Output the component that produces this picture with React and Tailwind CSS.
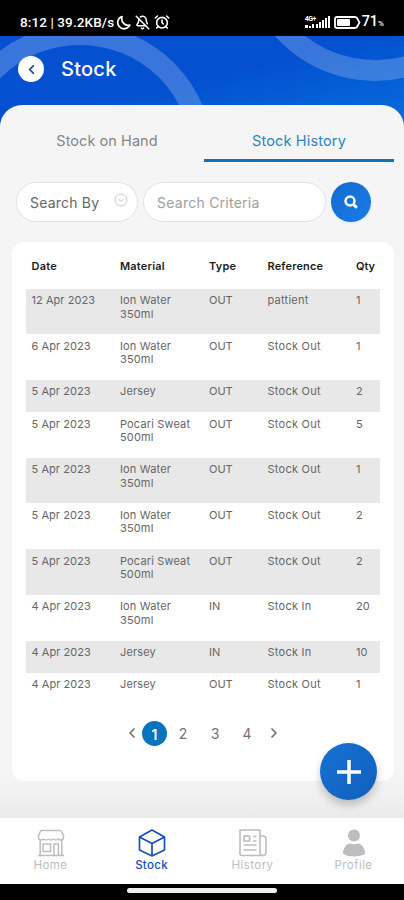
import React from 'react';
import { ChevronLeft, ChevronRight, BellOff, AlarmClock } from 'lucide-react';

const rows = [
  { date: '12 Apr 2023', material: 'Ion Water 350ml', type: 'OUT', reference: 'pattient', qty: 1 },
  { date: '6 Apr 2023', material: 'Ion Water 350ml', type: 'OUT', reference: 'Stock Out', qty: 1 },
  { date: '5 Apr 2023', material: 'Jersey', type: 'OUT', reference: 'Stock Out', qty: 2 },
  { date: '5 Apr 2023', material: 'Pocari Sweat 500ml', type: 'OUT', reference: 'Stock Out', qty: 5 },
  { date: '5 Apr 2023', material: 'Ion Water 350ml', type: 'OUT', reference: 'Stock Out', qty: 1 },
  { date: '5 Apr 2023', material: 'Ion Water 350ml', type: 'OUT', reference: 'Stock Out', qty: 2 },
  { date: '5 Apr 2023', material: 'Pocari Sweat 500ml', type: 'OUT', reference: 'Stock Out', qty: 2 },
  { date: '4 Apr 2023', material: 'Ion Water 350ml', type: 'IN', reference: 'Stock In', qty: 20 },
  { date: '4 Apr 2023', material: 'Jersey', type: 'IN', reference: 'Stock In', qty: 10 },
  { date: '4 Apr 2023', material: 'Jersey', type: 'OUT', reference: 'Stock Out', qty: 1 },
];

function StatusBar() {
  return (
    <div className="flex h-9 shrink-0 items-center bg-black pl-5 pr-5 pt-2 font-[Roboto,sans-serif] text-[13px] font-medium text-white">
      <span className="w-[96px] whitespace-nowrap text-[13.5px] tracking-[0.1px]">8:12 | 39.2KB/s</span>
      <div className="flex items-center gap-[4px]">
        <svg width="15" height="15" viewBox="0 0 15 15" fill="none" stroke="white" strokeWidth="1.700" strokeLinejoin="round">
          <path d="M6 1.500A6.300 6.300 0 1 0 13.800 10C9.500 11.500 4.500 7 6 1.500Z" />
        </svg>
        <BellOff size={15} strokeWidth={2.4} />
        <AlarmClock size={16} strokeWidth={2.4} />
      </div>
      <div className="ml-auto flex items-center">
        {/* Signal */}
        <div className="flex w-[27px] items-end">
          <div className="flex flex-col">
            <span className="text-[7px] font-bold leading-[7px] tracking-[-0.5px]">4G+</span>
            <svg width="10" height="5" viewBox="0 0 10 5" fill="white">
              <path d="M0 2h3v3H0zM4 3h2v2H4zM7 1h2v4H7z" />
            </svg>
          </div>
          <svg width="15" height="12" viewBox="0 0 15 12" fill="white">
            <path d="M0 8h2v4H0zM3 6h2v6H3zM6 4h2v8H6zM9 2h2v10H9zM12 0h2v12h-2z" />
          </svg>
        </div>
        {/* Battery */}
        <svg className="ml-0.5" width="27" height="13" viewBox="0 0 27 13">
          <path d="M3 1h18q2 0 2.500 2l2 3.500-2 3.500q-.5 2-2.500 2H3Q1 12 1 10V3q0-2 2-2Z" fill="none" stroke="white" strokeWidth="1.800" />
          <rect x="3" y="3" width="13" height="7" rx="1" fill="white" />
        </svg>
        <span className="ml-px text-[14.5px] leading-none">71<span className="text-[8px]">%</span></span>
      </div>
    </div>
  );
}

function Header() {
  return (
    <div className="relative h-[99px] shrink-0 overflow-hidden bg-linear-to-br from-[#0450d0] from-45% to-[#0c6fdc]">
      {/* Rings behind the title */}
      <svg className="absolute left-0 top-0" width="404" height="99" viewBox="0 36 404 99" fill="none" stroke="white" strokeWidth="21" strokeOpacity="0.21">
        <circle cx="80" cy="157" r="122.500" />
        <circle cx="375" cy="-53" r="123.500" />
      </svg>
      <div className="relative flex items-center pl-[18px] pt-5">
        <button className="flex size-[26px] items-center justify-center rounded-full bg-white text-[#173a94]">
          <ChevronLeft size={15} strokeWidth={2.8} />
        </button>
        <h1 className="ml-[17px] text-[20px] font-medium leading-[26px] tracking-[0.25px] text-white">Stock</h1>
      </div>
    </div>
  );
}

function Tabs() {
  return (
    <div className="flex px-[10px] text-[14.5px]">
      <button className="h-[57px] w-[194px] pt-[15px] tracking-[0.05px] text-[#858585]">Stock on Hand</button>
      <button className="h-[57px] w-[190px] border-b-[3px] border-[#1271b9] pt-[18px] tracking-[0.15px] text-[#2c83c2]">Stock History</button>
    </div>
  );
}

function SearchBar() {
  return (
    <div className="flex items-center pl-4 pt-5 text-[14px]">
      <div className="flex h-[40px] w-[122px] items-center justify-between rounded-full border border-[#e2e2e2] bg-white pl-[13px] pr-[9px] tracking-[0.2px] text-[#666]">
        Search By
        <svg className="-mt-1" width="14" height="14" viewBox="0 0 14 14" fill="none" stroke="#c9c9c9">
          <circle cx="7" cy="7" r="6" />
          <path d="m4.500 6 2.500 2.500L9.500 6" />
        </svg>
      </div>
      <input
        className="ml-[5px] h-[40px] w-[183px] rounded-full border border-[#e2e2e2] bg-white px-[13px] tracking-[0.25px] placeholder:text-[#a0a0a0]"
        placeholder="Search Criteria"
      />
      <button className="ml-[5px] flex size-10 items-center justify-center rounded-full bg-linear-to-br from-[#116ad0] to-[#1b7ce7] shadow-sm shadow-blue-100">
        <svg width="16" height="16" viewBox="0 0 16 16" fill="none" stroke="white">
          <circle cx="7" cy="7" r="4.500" strokeWidth="2.400" />
          <path d="m10.300 10.300 3.500 3.500" strokeWidth="3" />
        </svg>
      </button>
    </div>
  );
}

function StockTable() {
  return (
    <table className="w-[354px] table-fixed text-left text-[11px] leading-[13.5px]">
      <colgroup>
        <col className="w-[89px]" />
        <col className="w-[89px]" />
        <col className="w-[58px]" />
        <col className="w-[89px]" />
        <col className="w-[29px]" />
      </colgroup>
      <thead>
        <tr className="h-[34.5px] align-top text-[#1c1c1c]">
          <th className="pl-[5.5px] pt-1.5 font-semibold tracking-[0.2px]">Date</th>
          <th className="pl-[5px] pt-1.5 font-semibold tracking-[0.2px]">Material</th>
          <th className="pl-[5px] pt-1.5 font-semibold tracking-[0.2px]">Type</th>
          <th className="pl-[5.5px] pt-1.5 font-semibold tracking-[0.15px]">Reference</th>
          <th className="pl-[5px] pt-1.5 font-semibold">Qty</th>
        </tr>
      </thead>
      <tbody>
        {rows.map((row, i) => (
          <tr key={i} className="align-top text-[#666] odd:bg-[#e8e8e8]">
            <td className="pb-[13.2px] pl-[5.5px] pt-[5.5px] tracking-[0.05px]">{row.date}</td>
            <td className="pb-[13.2px] pl-[5px] pr-2 pt-[5.5px] tracking-[0.15px]">{row.material}</td>
            <td className="pb-[13.2px] pl-[5px] pt-[5.5px]">{row.type}</td>
            <td className="pb-[13.2px] pl-[5.5px] pt-[5.5px] tracking-[0.25px]">{row.reference}</td>
            <td className="pb-[13.2px] pl-[5px] pt-[5.5px]">{row.qty}</td>
          </tr>
        ))}
      </tbody>
    </table>
  );
}

function Pagination() {
  return (
    <div className="mt-4 flex items-center pl-[98px] text-[14px] text-[#737373]">
      <ChevronLeft size={16} strokeWidth={2.6} />
      <span className="ml-0.5 flex size-[25px] items-center justify-center rounded-full bg-[#0874bd] pt-0.5 font-semibold text-white">1</span>
      <span className="w-8 pl-1 pt-0.5 text-center leading-none -ml-0.5">2</span>
      <span className="w-8 pl-1 pt-0.5 text-center leading-none">3</span>
      <span className="w-8 pl-1 pt-0.5 text-center leading-none">4</span>
      <ChevronRight size={16} strokeWidth={2.6} className="ml-[5px]" />
    </div>
  );
}

function HomeIcon() {
  return (
    <svg width="28" height="28" viewBox="0 0 28 28" fill="none" stroke="currentColor" strokeWidth="1.500" strokeLinejoin="round">
      <path d="M5 1.500h18q1.500 0 2 1.500l1.500 4v1.500a2.500 2.500 0 0 1-2.500 2.500q-1.700 0-2.500-1-1.500 1-2.500 1t-2.500-1q-1.500 1-2.500 1t-2.500-1q-1.500 1-2.500 1t-2.500-1q-.8 1-2.500 1A2.500 2.500 0 0 1 1.500 8.500V7L3 3q.5-1.500 2-1.500Z" />
      <path d="M3.200 11v15M24.800 11v15M1 26.500h26" />
      <path d="M6 15h7.500v7.500H6zM17 26V15h4.500v11" />
    </svg>
  );
}

function StockIcon() {
  return (
    <svg width="28" height="28" viewBox="0 0 28 28" fill="none" stroke="currentColor" strokeWidth="1.700" strokeLinejoin="round">
      <path d="m14 1 12.500 7v13L14 27 1.500 21V8ZM1.500 8 14 14.500 26.500 8M14 14.500V27" />
    </svg>
  );
}

function HistoryIcon() {
  return (
    <svg width="28" height="28" viewBox="0 0 28 28" fill="none" stroke="currentColor" strokeWidth="1.600">
      <path d="M24 26.500H3A2 2 0 0 1 1 24.500V1h20v22.500q0 3 3 3t3-3V10q0-3-3-3h-3" />
      <path d="M5 7h5.500v5H5zM14 7.500h3.500M14 12h3.500M4.500 16h13M4.500 21h13" />
    </svg>
  );
}

function ProfileIcon() {
  return (
    <svg width="28" height="28" viewBox="0 0 28 28" fill="currentColor">
      <circle cx="14" cy="6.500" r="6" />
      <path d="M3 25c0-6.500 4-10.500 7-10.500q4 1.500 8 0c3 0 7 4 7 10.500Q20 27.500 14 27.500T3 25Z" />
    </svg>
  );
}

const navItems = [
  { label: 'Home', icon: HomeIcon },
  { label: 'Stock', icon: StockIcon, active: true },
  { label: 'History', icon: HistoryIcon },
  { label: 'Profile', icon: ProfileIcon },
];

function App() {
  return (
    <div className="flex h-[900px] w-[404px] flex-col overflow-hidden bg-[#f4f4f4] font-[Inter,sans-serif]">
      <StatusBar />
      <Header />

      {/* Body */}
      <main className="relative -mt-[30px] flex-1 rounded-t-[22px] bg-linear-to-b from-[#f5f5f5] from-94% to-[#ebebeb]">
        <Tabs />
        <SearchBar />
        <section className="ml-3 mt-5 h-[539px] w-[382px] rounded-[12px] bg-white pl-3.5 pt-3">
          <StockTable />
          <Pagination />
        </section>
        <button className="absolute bottom-[18px] right-[27px] flex size-[57px] items-center justify-center rounded-full bg-linear-to-br from-[#1671d5] to-[#1160bb] shadow-[0_5px_9px_rgba(0,0,0,0.22)]">
          <svg width="26" height="26" viewBox="0 0 26 26" stroke="white" strokeWidth="3.500">
            <path d="M13 1v24M1 13h24" />
          </svg>
        </button>
      </main>

      {/* Bottom nav */}
      <nav className="flex h-[66px] shrink-0 bg-white pt-[11px]">
        {navItems.map(({ label, icon: Icon, active }) => (
          <a key={label} className={`flex flex-1 flex-col items-center text-[11.5px] leading-[17px] ${active ? 'text-[#1650bd]' : 'text-[#bdbdbd]'}`}>
            <Icon />
            <span className={active ? 'font-medium tracking-[0.3px]' : 'tracking-[0.45px]'}>{label}</span>
          </a>
        ))}
      </nav>
      <div className="flex h-4 shrink-0 justify-center bg-black pt-1">
        <div className="h-[5px] w-[150px] rounded-full bg-[#eee]" />
      </div>
    </div>
  );
}

export default App;
